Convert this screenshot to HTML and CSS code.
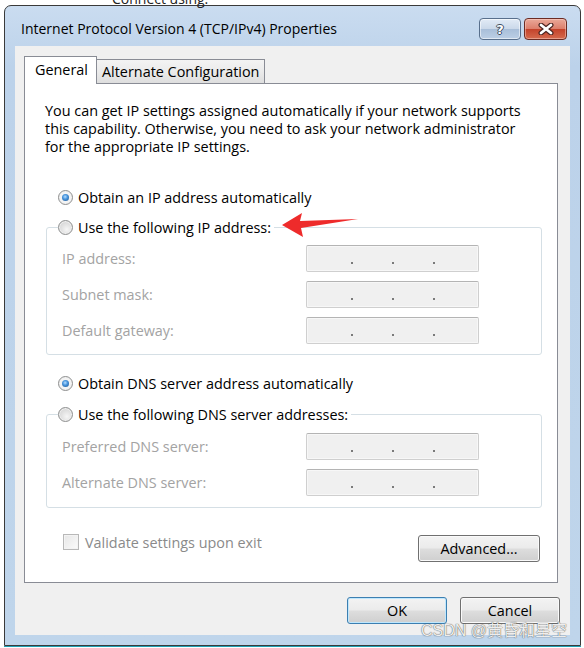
FILE: index.html
```html
<!DOCTYPE html>
<html>
<head>
<meta charset="utf-8">
<link rel="stylesheet" href="styles.css">
</head>
<body>
<div class="desktop">
  <div class="behind">Connect using:</div>
  <div class="window">
    <div class="titlebar">
      <span class="title">Internet Protocol Version 4 (TCP/IPv4) Properties</span>
      <div class="caption-btns">
        <span class="cbtn help">?</span>
        <span class="cbtn close"><svg width="18" height="12" viewBox="0 0 18 12"><path d="M4 2 L14 10 M14 2 L4 10" stroke="#4a2420" stroke-width="5" stroke-linecap="round"/><path d="M4 2 L14 10 M14 2 L4 10" stroke="#fff" stroke-width="2.8" stroke-linecap="round"/></svg></span>
      </div>
    </div>
    <div class="client">
      <div class="tabs">
        <div class="tab active">General</div>
        <div class="tab">Alternate Configuration</div>
      </div>
      <div class="panel">
        <p class="intro">You can get IP settings assigned automatically if your network supports<br>this capability. Otherwise, you need to ask your network administrator<br>for the appropriate IP settings.</p>

        <div class="radio-row first"><span class="radio checked"></span><span>Obtain an IP address automatically</span></div>
        <fieldset class="group ip-group">
          <legend><span class="radio"></span><span>Use the following IP address:</span></legend>
          <div class="grid">
            <span class="lbl">IP address:</span>
            <div class="ipbox"><i></i><i></i><i></i></div>
            <span class="lbl">Subnet mask:</span>
            <div class="ipbox"><i></i><i></i><i></i></div>
            <span class="lbl">Default gateway:</span>
            <div class="ipbox"><i></i><i></i><i></i></div>
          </div>
        </fieldset>

        <div class="radio-row dns"><span class="radio checked"></span><span>Obtain DNS server address automatically</span></div>
        <fieldset class="group dns-group">
          <legend><span class="radio"></span><span>Use the following DNS server addresses:</span></legend>
          <div class="grid">
            <span class="lbl">Preferred DNS server:</span>
            <div class="ipbox"><i></i><i></i><i></i></div>
            <span class="lbl">Alternate DNS server:</span>
            <div class="ipbox"><i></i><i></i><i></i></div>
          </div>
        </fieldset>

        <div class="bottom-row">
          <div class="validate"><span class="check"></span><span>Validate settings upon exit</span></div>
          <div class="btn advanced">Advanced...</div>
        </div>
      </div>
      <div class="actions">
        <div class="btn default">OK</div>
        <div class="btn">Cancel</div>
      </div>
    </div>
  </div>
  <svg class="arrow" width="82" height="32" viewBox="0 0 82 32"><polygon points="2,17 22,5 20,13 78,11 21,20 23,29" fill="#ee2b2b"/></svg>
  <div class="watermark">CSDN @黄昏和星空</div>
</div>
</body>
</html>
```
FILE: styles.css
```css
* { box-sizing: border-box; }
html, body { margin: 0; }
body {
  background: #ffffff;
  font-family: "Open Sans", "Noto Sans", sans-serif;
  font-size: 14.4px;
  color: #111;
  overflow: hidden;
}
.desktop {
  position: relative;
  width: 584px;
  height: 648px;
  padding: 5px 3px 0 4px;
  overflow: hidden;
}
.behind {
  position: absolute;
  left: 112px;
  top: -11px;
  font-size: 14px;
  color: #222;
}
.window {
  width: 577px;
  height: 641px;
  border: 1px solid #3a3a3a;
  border-radius: 7px 7px 0 0;
  background: linear-gradient(#cadcf0, #bcd2ea 60px, #bfd5eb);
  padding: 0 10px 10px;
  display: flex;
  flex-direction: column;
  box-shadow: 0 1px 0 #1f9fb3;
}
.titlebar {
  height: 40px;
  display: flex;
  align-items: flex-start;
  justify-content: space-between;
  padding-left: 6px;
  padding-right: 3px;
}
.title {
  margin-top: 13px;
  font-size: 14px;
  line-height: 20px;
  color: #000;
}
.caption-btns {
  display: flex;
  gap: 3px;
  margin-top: 12px;
}
.cbtn {
  height: 22px;
  border-radius: 4px;
  display: flex;
  align-items: center;
  justify-content: center;
}
.help {
  width: 42px;
  border: 1px solid #586f8c;
  background: linear-gradient(#e2ebf6 0%, #cbd9ea 48%, #a9bfd9 52%, #bccfe5 100%);
  box-shadow: inset 0 0 0 1px rgba(255,255,255,0.55);
  color: #fff;
  font-family: "DejaVu Sans", sans-serif;
  font-weight: bold;
  font-size: 13px;
  text-shadow: 1px 0 0 #3d4d60, -1px 0 0 #3d4d60, 0 1px 0 #3d4d60, 0 -1px 0 #3d4d60;
}
.close {
  width: 43px;
  border: 1px solid #6b2c24;
  background: linear-gradient(#eaa999 0%, #dd7f6c 48%, #c4432b 52%, #d56a4e 100%);
  box-shadow: inset 0 0 0 1px rgba(255,220,210,0.45);
}
.client {
  height: 589px;
  background: #f0f0f0;
  padding: 10px 10px 6px 9px;
  display: flex;
  flex-direction: column;
}
.tabs {
  display: flex;
  align-items: flex-end;
  height: 27px;
  position: relative;
  z-index: 1;
}
.tab {
  display: flex;
  align-items: center;
  color: #000;
  white-space: nowrap;
}
.tab.active {
  width: 73px;
  height: 28px;
  margin-bottom: -1px;
  border: 1px solid #898c95;
  border-bottom: none;
  background: #fff;
  padding: 0 0 2px 10px;
}
.tab:not(.active) {
  width: 168px;
  height: 24px;
  border: 1px solid #898c95;
  border-left: none;
  border-bottom: none;
  background: linear-gradient(#f3f3f3, #ebebeb 50%, #dedede);
  padding-left: 5px;
}
.panel {
  width: 534px;
  height: 500px;
  border: 1px solid #898c95;
  background: #fff;
  padding: 18px 17px 0 20px;
  display: flex;
  flex-direction: column;
}
.intro {
  margin: 0;
  line-height: 18px;
  color: #000;
  white-space: nowrap;
}
.radio-row {
  display: flex;
  align-items: center;
  gap: 5px;
  height: 20px;
  padding-left: 13px;
  color: #000;
}
.radio-row.first { margin-top: 31px; }
.radio-row.dns { margin-top: 18px; }
.radio {
  position: relative;
  flex: none;
  width: 15px;
  height: 15px;
  border-radius: 50%;
  border: 1px solid #8e8f8f;
  background: radial-gradient(circle at 60% 65%, #f6f6f6 0, #e4e4e4 40%, #cdcdcd 100%);
  box-shadow: inset 0 0 0 1px #f0f0f0;
}
.radio.checked {
  background: #f4f4f4;
}
.radio.checked::after {
  content: "";
  position: absolute;
  left: 3px;
  top: 3px;
  width: 7px;
  height: 7px;
  border-radius: 50%;
  background: radial-gradient(circle at 45% 40%, #b5ddff 0, #4a97df 40%, #184f8a 100%);
}
.group {
  margin: 0 0 0 1px;
  width: 496px;
  border: 1px solid #d5dfe5;
  border-radius: 3px;
  padding: 8px 0 10px 0;
}
.ip-group { margin-top: 10px; }
.dns-group { margin-top: 11px; padding-top: 9px; padding-bottom: 11px; }
.group legend {
  display: flex;
  align-items: center;
  gap: 5px;
  height: 20px;
  margin-left: 11px;
  padding: 0 3px 0 0;
  color: #000;
}
.grid {
  display: grid;
  grid-template-columns: 244px 173px;
  grid-auto-rows: 27px;
  row-gap: 9px;
  padding-left: 15px;
  align-items: center;
}
.lbl {
  color: #a3a3a3;
}
.ipbox {
  height: 27px;
  border: 1px solid #cfcfcf;
  border-top-color: #b4b4b4;
  border-radius: 2px;
  background: #f0f0f0;
  box-shadow: inset 0 0 0 1px #f7f7f7;
  display: flex;
  align-items: flex-end;
  padding: 0 0 7px 44px;
  gap: 39px;
}
.ipbox i {
  width: 2px;
  height: 2px;
  background: #7a7a7a;
}
.bottom-row {
  margin-top: 26px;
  display: flex;
  justify-content: space-between;
  align-items: flex-start;
}
.validate {
  display: flex;
  align-items: center;
  gap: 6px;
  padding-left: 18px;
  height: 16px;
  color: #8a8a8a;
}
.check {
  width: 16px;
  height: 16px;
  border: 1px solid #b8b8b8;
  background: linear-gradient(135deg, #e6e6e6, #fbfbfb);
  box-shadow: inset 0 0 0 1px #f3f3f3;
}
.btn {
  height: 27px;
  width: 100px;
  border: 1px solid #707070;
  border-radius: 3px;
  background: linear-gradient(#f3f3f3 0%, #ebebeb 48%, #dddddd 52%, #cfcfcf 100%);
  box-shadow: inset 0 0 0 1px #fafafa;
  display: flex;
  align-items: center;
  justify-content: center;
  color: #000;
}
.btn.advanced {
  width: 122px;
  margin-top: 1px;
}
.btn.default {
  border-color: #3c7fb1;
  box-shadow: inset 0 0 0 1px #bfe7fd;
}
.actions {
  margin-top: 14px;
  display: flex;
  justify-content: flex-end;
  gap: 13px;
}
.arrow {
  position: absolute;
  left: 280px;
  top: 208px;
}
.watermark {
  position: absolute;
  left: 421px;
  top: 621px;
  font-family: "Liberation Sans", "Noto Sans CJK SC", sans-serif;
  font-size: 16px;
  line-height: 20px;
  color: rgba(248,248,248,0.95);
  text-shadow: 0 0 1px rgba(40,40,40,0.75), 0 0 1px rgba(40,40,40,0.5);
}
```
